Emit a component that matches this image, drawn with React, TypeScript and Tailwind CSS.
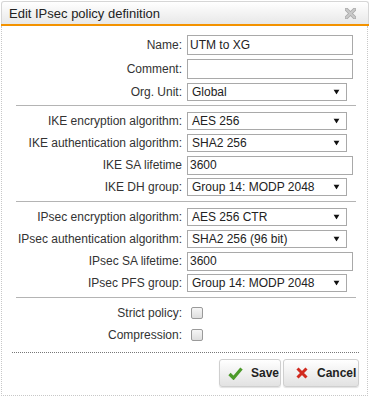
import React from "react";

const Arrow = () => (
  <svg width="7" height="5" viewBox="0 0 7 5" className="absolute right-[6px] top-1/2 -translate-y-1/2">
    <polygon points="0.5,0 6.5,0 3.5,5" fill="#111" />
  </svg>
);

function Label({ children }: { children: React.ReactNode }) {
  return <div className="w-[180px] shrink-0 text-right text-[#333] whitespace-nowrap">{children}</div>;
}

function InputRow({ label, value, h = 24, ih = 20 }: { label: string; value: string; h?: number; ih?: number }) {
  return (
    <div className={`flex items-center ${h === 24 ? "h-[24px]" : "h-[22px]"}`}>
      <Label>{label}</Label>
      <div
        className={`ml-[5px] w-[166px] ${ih === 20 ? "h-[20px]" : "h-[19px]"} border border-[#a9a9a9] bg-white pl-[2px] flex items-center text-[#222] whitespace-nowrap`}
      >
        {value}
      </div>
    </div>
  );
}

function SelectRow({ label, value }: { label: string; value: string }) {
  return (
    <div className="flex items-center h-[22px]">
      <Label>{label}</Label>
      <div className="relative ml-[5px] w-[160px] h-[18px] border border-[#a9a9a9] bg-white pl-[4px] flex items-center text-[#222] whitespace-nowrap">
        {value}
        <Arrow />
      </div>
    </div>
  );
}

function CheckRow({ label }: { label: string }) {
  return (
    <div className="flex items-center h-[22px]">
      <Label>{label}</Label>
      <div className="ml-[9px] w-[12px] h-[12px] rounded-[2px] border border-[#9a9a9a] bg-gradient-to-b from-[#f6f6f6] to-[#dedede]" />
    </div>
  );
}

const Sep = () => <div className="ml-[14px] w-[340px] h-px bg-[#b4b4b4]" />;

export default function App() {
  return (
    <div className="w-[371px] h-[400px] bg-white font-['Liberation_Sans',Arial,sans-serif] text-[12px] leading-none">
      <div className="pt-[1px] pl-[1px] pr-[2px]">
        <div className="h-[23px] rounded-t-[3px] border border-b-0 border-[#d6d6d6] bg-gradient-to-b from-white to-[#e8e8e8] flex items-center justify-between pl-[7px] pr-[12px]">
          <span className="text-[13px] text-[#222]">Edit IPsec policy definition</span>
          <svg width="11" height="11" viewBox="0 0 11 11">
            <path d="M1.5 1.5 L9.5 9.5 M9.5 1.5 L1.5 9.5" stroke="#a8a8a8" strokeWidth="3.6" strokeLinecap="round" />
            <path d="M1.5 1.5 L9.5 9.5 M9.5 1.5 L1.5 9.5" stroke="#c9c9c9" strokeWidth="2" strokeLinecap="round" />
          </svg>
        </div>
        <div className="h-[2px] bg-[#f39200]" />
      </div>
      <div className="ml-[1px] w-[367px] border border-t-0 border-dotted border-[#c8c8c8] pt-[7px] pb-[8px]">
        <InputRow label="Name:" value="UTM to XG" />
        <InputRow label="Comment:" value="" />
        <SelectRow label="Org. Unit:" value="Global" />
        <div className="mt-[2px]">
          <Sep />
        </div>
        <div className="mt-[4px] mb-[3px]">
          <SelectRow label="IKE encryption algorithm:" value="AES 256" />
          <SelectRow label="IKE authentication algorithm:" value="SHA2 256" />
          <InputRow label="IKE SA lifetime" value="3600" h={22} ih={19} />
          <SelectRow label="IKE DH group:" value="Group 14: MODP 2048" />
        </div>
        <Sep />
        <div className="mt-[4px] mb-[3px]">
          <SelectRow label="IPsec encryption algorithm:" value="AES 256 CTR" />
          <SelectRow label="IPsec authentication algorithm:" value="SHA2 256 (96 bit)" />
          <InputRow label="IPsec SA lifetime:" value="3600" h={22} ih={19} />
          <SelectRow label="IPsec PFS group:" value="Group 14: MODP 2048" />
        </div>
        <Sep />
        <div className="mt-[4px]">
          <CheckRow label="Strict policy:" />
          <CheckRow label="Compression:" />
        </div>
        <div className="mt-[6px] ml-[10px] w-[347px] border-t border-dotted border-[#777]" />
        <div className="mt-[6px] flex justify-end gap-[2px] pr-[8px]">
          <button className="h-[28px] w-[62px] rounded-[3px] border border-[#cfcfcf] bg-gradient-to-b from-white to-[#e2e2e2] shadow-[0_1px_1px_rgba(0,0,0,0.12)] flex items-center pl-[8px] gap-[8px] font-bold text-[12px] text-[#222]">
            <svg width="15" height="13" viewBox="0 0 15 13">
              <path d="M1.5 7 L5.5 11 L13.5 1.5" fill="none" stroke="#4d9a2a" strokeWidth="3.2" strokeLinejoin="miter" strokeLinecap="butt" />
            </svg>
            Save
          </button>
          <button className="h-[28px] w-[76px] rounded-[3px] border border-[#cfcfcf] bg-gradient-to-b from-white to-[#e2e2e2] shadow-[0_1px_1px_rgba(0,0,0,0.12)] flex items-center pl-[12px] gap-[9px] font-bold text-[12px] text-[#222]">
            <svg width="12" height="12" viewBox="0 0 12 12">
              <path d="M1.5 1.5 L10.5 10.5 M10.5 1.5 L1.5 10.5" stroke="#d12a1f" strokeWidth="3" strokeLinecap="butt" />
            </svg>
            Cancel
          </button>
        </div>
      </div>
    </div>
  );
}
